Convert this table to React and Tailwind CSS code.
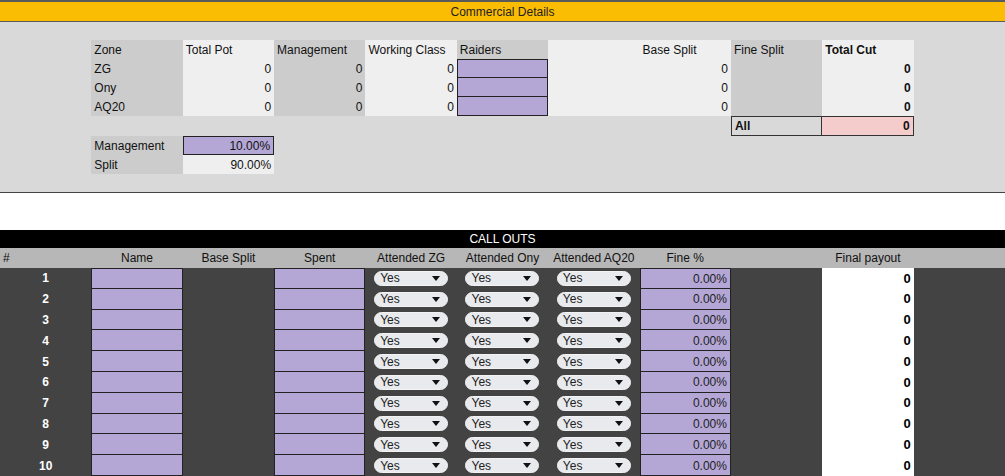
const zones = [
  { name: "ZG" },
  { name: "Ony" },
  { name: "AQ20" },
];

const Cell = ({ className = "", children }) => (
  <div className={`h-full flex items-center px-[3px] overflow-hidden whitespace-nowrap ${className}`}>{children}</div>
);

const Dropdown = () => (
  <div className="h-[15px] w-[74px] mx-auto rounded-full bg-[#e8eaed] border border-[#f3f3f3] flex items-center justify-between pl-[5px] pr-[7px] text-[12px] text-[#222]">
    <span>Yes</span>
    <svg width="8" height="5" viewBox="0 0 8 5">
      <path d="M0 0 L8 0 L4 5 Z" fill="#111" />
    </svg>
  </div>
);

const CommercialDetails = () => {
  return (
    <section className="bg-[#d9d9d9] border-b border-[#444]">
      <div className="h-[22px] bg-[#fbbc04] border-t-2 border-b border-[#5a5a5a] flex items-center justify-center text-[12px] text-[#222]">
        Commercial Details
      </div>
      <div className="pt-[18px] pb-[18px]">
        <div className="grid grid-cols-11 grid-rows-[19px_19px_19px_19px_20px_19px_19px] text-[12px] text-[#111]">
          {/* header */}
          <div />
          <Cell className="bg-[#cccccc]">Zone</Cell>
          <Cell className="bg-[#efefef]">Total Pot</Cell>
          <Cell className="bg-[#cccccc]">Management</Cell>
          <Cell className="bg-[#efefef]">Working Class</Cell>
          <Cell className="bg-[#cccccc]">Raiders</Cell>
          <Cell className="bg-[#efefef]" />
          <Cell className="bg-[#efefef]">Base Split</Cell>
          <Cell className="bg-[#cccccc]">Fine Split</Cell>
          <Cell className="bg-[#efefef] font-bold">Total Cut</Cell>
          <div />

          {zones.map((z, i) => (
            <div key={z.name} className="contents">
              <div />
              <Cell className="bg-[#cccccc]">{z.name}</Cell>
              <Cell className="bg-[#efefef] justify-end">0</Cell>
              <Cell className="bg-[#cccccc] justify-end">0</Cell>
              <Cell className="bg-[#efefef] justify-end">0</Cell>
              <Cell className={`bg-[#b4a7d6] border-x border-b border-[#222] ${i === 0 ? "border-t" : ""}`} />
              <Cell className="bg-[#efefef]" />
              <Cell className="bg-[#efefef] justify-end">0</Cell>
              <Cell className="bg-[#cccccc]" />
              <Cell className="bg-[#efefef] justify-end font-bold">0</Cell>
              <div />
            </div>
          ))}

          {/* All row */}
          <div className="col-span-8" />
          <Cell className="bg-[#d9d9d9] border border-[#333] font-bold">All</Cell>
          <Cell className="bg-[#f4cccc] border-y border-r border-[#333] justify-end font-bold">0</Cell>
          <div />

          {/* Management */}
          <div />
          <Cell className="bg-[#cccccc]">Management</Cell>
          <Cell className="bg-[#b4a7d6] border border-[#222] justify-end">10.00%</Cell>
          <div className="col-span-8" />

          {/* Split */}
          <div />
          <Cell className="bg-[#cccccc]">Split</Cell>
          <Cell className="bg-[#efefef] justify-end">90.00%</Cell>
          <div className="col-span-8" />
        </div>
      </div>
    </section>
  );
};

const CallOuts = () => {
  const rows = Array.from({ length: 10 }, (_, i) => i + 1);
  return (
    <section className="mt-[37px]">
      <div className="h-[18px] bg-black text-white text-[12px] flex items-center justify-center">CALL OUTS</div>
      <div className="grid grid-cols-11 h-[20px] bg-[#b7b7b7] text-[12px] text-[#111] items-center">
        <div className="px-[3px]">#</div>
        <div className="text-center">Name</div>
        <div className="text-center">Base Split</div>
        <div className="text-center">Spent</div>
        <div className="text-center">Attended ZG</div>
        <div className="text-center">Attended Ony</div>
        <div className="text-center">Attended AQ20</div>
        <div className="text-center">Fine %</div>
        <div />
        <div className="text-center">Final payout</div>
        <div />
      </div>
      <div className="bg-[#434343]">
        {rows.map((n) => (
          <div key={n} className="grid grid-cols-11 h-[20.8px] text-[12px]">
            <Cell className="justify-center text-white font-bold">{n}</Cell>
            <Cell className={`bg-[#b4a7d6] border-x border-b border-[#222] ${n === 1 ? "border-t" : ""}`} />
            <Cell />
            <Cell className={`bg-[#b4a7d6] border-x border-b border-[#222] ${n === 1 ? "border-t" : ""}`} />
            <div className="flex items-center"><Dropdown /></div>
            <div className="flex items-center"><Dropdown /></div>
            <div className="flex items-center"><Dropdown /></div>
            <Cell className={`bg-[#b4a7d6] border-x border-b border-[#222] justify-end text-[#222] pt-[1px] ${n === 1 ? "border-t" : ""}`}>0.00%</Cell>
            <Cell />
            <Cell className="bg-white justify-end font-bold text-[13px] text-black">0</Cell>
            <Cell />
          </div>
        ))}
      </div>
    </section>
  );
};

export default function App() {
  return (
    <div className="w-[1005px] h-[476px] overflow-hidden bg-white font-['Liberation_Sans',Arial,sans-serif]">
      <CommercialDetails />
      <CallOuts />
    </div>
  );
}
